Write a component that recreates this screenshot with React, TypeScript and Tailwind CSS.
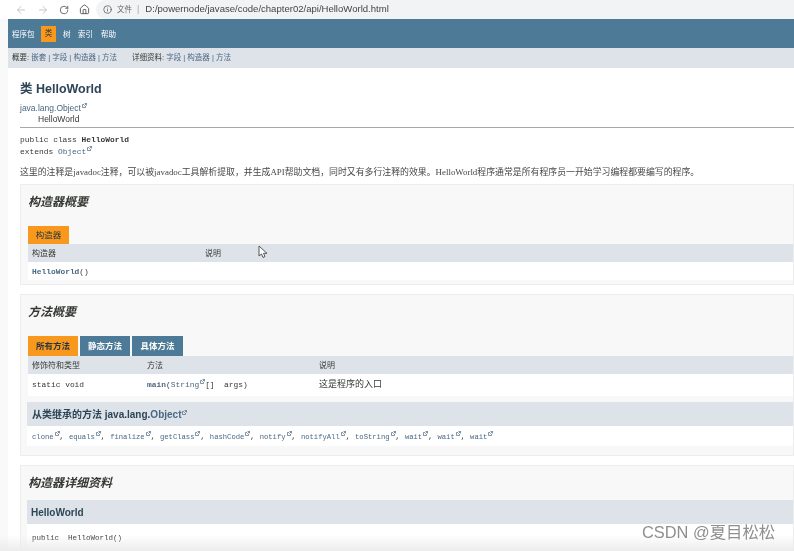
import { ArrowLeft, ArrowRight, RotateCw, Home, Info } from "lucide-react";

const SANS = "font-['Liberation_Sans','Noto_Sans_CJK_SC',sans-serif]";
const MONO = "font-['Liberation_Mono','Noto_Sans_CJK_SC',monospace]";
const SERIF = "font-['Liberation_Serif','Noto_Sans_CJK_SC',serif]";

function Ext() {
  return (
    <svg width="5" height="5" viewBox="0 0 10 10" className="inline-block align-[3px] ml-px" fill="none" stroke="currentColor" strokeWidth="1.4">
      <path d="M7 6v3H1V3h3" />
      <path d="M5 1h4v4M9 1 4.5 5.5" />
    </svg>
  );
}

function Inherited({ name }: { name: string }) {
  return (
    <span>
      {name}
      <Ext />
    </span>
  );
}

export default function App() {
  const inherited = ["clone", "equals", "finalize", "getClass", "hashCode", "notify", "notifyAll", "toString", "wait", "wait", "wait"];
  return (
    <div className={`relative w-[794px] h-[551px] overflow-hidden bg-white blur-[0.35px] ${SANS}`}>
      <div className="h-[19px] flex items-center bg-white text-[#5f6368]">
        <div className="w-[96px] flex items-center pl-[15px] gap-[10px]">
          <ArrowLeft size={12} className="text-[#c4c7ca]" />
          <ArrowRight size={12} className="text-[#c4c7ca]" />
          <RotateCw size={10} className="text-[#555]" />
          <Home size={11} className="text-[#555]" />
        </div>
        <div className="flex-1 h-[19px] bg-[#f1f3f4] rounded-l-[10px] flex items-center pl-[7px] text-[9px] whitespace-nowrap">
          <Info size={9} className="text-[#555]" />
          <span className="ml-[5px] text-[#666] text-[7.5px] w-[15px]">文件</span>
          <span className="ml-[5px] mr-[6px] text-[#aaa]">|</span>
          <span className="text-[#444] text-[9.55px]">D:/powernode/javase/code/chapter02/api/HelloWorld.html</span>
        </div>
      </div>

      <div className="flex">
        <div className="w-[8px] shrink-0 bg-[#f9f9f9] h-[532px]" />
        <div className="flex-1 min-w-0">
          <div className="h-[29px] bg-[#4d7a97] flex items-start pl-[4px] text-white text-[7.5px]">
            <span className="mt-[10px]">程序包</span>
            <span className="ml-[6.5px] mt-[7px] w-[15px] h-[16px] bg-[#f8981d] text-[#253441] flex items-center justify-center">类</span>
            <span className="ml-[7px] mt-[10px]">树</span>
            <span className="ml-[7.5px] mt-[10px]">索引</span>
            <span className="ml-[8px] mt-[10px]">帮助</span>
          </div>
          <div className="h-[20px] bg-[#dee3e9] flex items-center pl-[4px] text-[7.5px] text-[#4a6782] whitespace-nowrap">
            <span className="text-[#353833]">概要:&nbsp;</span>嵌套 | 字段 | 构造器 | 方法
            <span className="ml-[15px] text-[#353833]">详细资料:&nbsp;</span>字段 | 构造器 | 方法
          </div>

          <div className="pl-[12px]">
            <h1 className="mt-[14px] text-[12.5px] leading-[15px] font-bold text-[#2c4557]">类 HelloWorld</h1>
            <div className="mt-[6px] text-[8.5px] leading-[10px] text-[#4a6782]">
              java.lang.Object
              <Ext />
            </div>
            <div className="mt-[1px] pl-[18px] text-[8.5px] leading-[10px] text-[#353833]">HelloWorld</div>
            <div className="mt-[3px] h-px bg-[#a8a8a8]" />
            <div className={`mt-[6px] text-[7.9px] leading-[12px] text-[#353833] ${MONO}`}>
              <div>
                public class <b>HelloWorld</b>
              </div>
              <div>
                extends <span className="text-[#4a6782]">Object</span>
                <span className="text-[#4a6782]">
                  <Ext />
                </span>
              </div>
            </div>
            <p className={`mt-[8px] text-[8.9px] leading-[12px] text-[#474747] whitespace-nowrap ${SERIF}`}>
              这里的注释是javadoc注释，可以被javadoc工具解析提取，并生成API帮助文档，同时又有多行注释的效果。HelloWorld程序通常是所有程序员一开始学习编程都要编写的程序。
            </p>

            <section className="mt-[6px] h-[101px] bg-[#f8f8f8] border border-[#ededed] pl-[7px]">
              <h2 className="mt-[10px] text-[12px] leading-[15px] font-bold italic text-[#353833]">构造器概要</h2>
              <div className="mt-[16px] w-[41px] h-[18px] bg-[#f8981d] text-[8.5px] text-[#253441] flex items-center justify-center">构造器</div>
              <div className="h-[18px] bg-[#dee3e9] flex items-center pt-[2px] text-[8px] text-[#353833]">
                <span className="w-[177px] pl-[4px]">构造器</span>
                <span>说明</span>
              </div>
              <div className={`h-[18px] bg-white flex items-center pt-[2px] pl-[4px] text-[7.9px] text-[#4a6782] ${MONO}`}>
                <b>HelloWorld</b>
                <span className="text-[#353833]">()</span>
              </div>
            </section>

            <section className="mt-[9px] h-[162px] bg-[#f8f8f8] border border-[#ededed] pl-[7px]">
              <h2 className="mt-[10px] text-[12px] leading-[15px] font-bold italic text-[#353833]">方法概要</h2>
              <div className="mt-[16px] flex h-[20px] gap-[2px] text-[8.5px] font-bold">
                <span className="w-[50px] bg-[#f8981d] text-[#253441] flex items-center justify-center">所有方法</span>
                <span className="w-[50px] bg-[#4d7a97] text-white flex items-center justify-center">静态方法</span>
                <span className="w-[51px] bg-[#4d7a97] text-white flex items-center justify-center">具体方法</span>
              </div>
              <div className="h-[18px] bg-[#dee3e9] flex items-center pt-[1px] text-[8px] text-[#353833]">
                <span className="w-[119px] pl-[4px]">修饰符和类型</span>
                <span className="w-[172px]">方法</span>
                <span>说明</span>
              </div>
              <div className="h-[22px] bg-white flex items-center text-[#353833]">
                <span className={`w-[119px] pl-[4px] text-[7.9px] ${MONO}`}>static void</span>
                <span className={`w-[172px] text-[7.9px] ${MONO}`}>
                  <b className="text-[#4a6782]">main</b>(<span className="text-[#4a6782]">String</span>
                  <span className="text-[#4a6782]">
                    <Ext />
                  </span>
                  []&nbsp; args)
                </span>
                <span className={`text-[9px] ${SERIF}`}>这是程序的入口</span>
              </div>
              <div className="mt-[6px] -ml-[1px] h-[24px] bg-[#dee3e9] flex items-center pl-[5px] text-[10px] font-bold text-[#2c4557]">
                从类继承的方法 java.lang.
                <span className="text-[#4a6782]">Object</span>
                <span className="text-[#4a6782]">
                  <Ext />
                </span>
              </div>
              <div className={`h-[20px] bg-white -ml-[1px] flex items-center pt-[1px] pl-[5px] text-[7.2px] text-[#4a6782] whitespace-nowrap ${MONO}`}>
                {inherited.map((n, i) => (
                  <span key={i} className="mr-[5px]">
                    <Inherited name={n} />
                    {i < inherited.length - 1 ? <span className="text-[#353833]">,</span> : null}
                  </span>
                ))}
              </div>
            </section>

            <section className="mt-[9px] h-[100px] bg-[#f8f8f8] border border-[#ededed] pl-[7px]">
              <h2 className="mt-[10px] text-[12px] leading-[15px] font-bold italic text-[#353833]">构造器详细资料</h2>
              <div className="mt-[9px] -ml-[1px] h-[24px] bg-[#dee3e9] flex items-center pl-[4px] text-[10px] font-bold text-[#2c4557]">HelloWorld</div>
              <div className={`h-[30px] bg-white -ml-[1px] flex items-center pl-[5px] text-[7.5px] text-[#1f1f1f] ${MONO}`}>public&nbsp; HelloWorld()</div>
            </section>
          </div>
        </div>
      </div>

      <svg className="absolute left-[258px] top-[245px]" width="10" height="14" viewBox="0 0 10 14" fill="#fff" stroke="#555" strokeWidth="1">
        <path d="M1 1v10l2.5-2 1.5 3.5 2-1-1.5-3.2H9z" />
      </svg>
      <div className="absolute left-0 right-0 bottom-0 h-[16px] bg-gradient-to-b from-transparent to-[#ececec]" />
      <div className="absolute left-[642px] top-[522px] text-[16.4px] leading-[20px] text-[#8f8f8f] whitespace-nowrap">CSDN @夏目松松</div>
    </div>
  );
}
